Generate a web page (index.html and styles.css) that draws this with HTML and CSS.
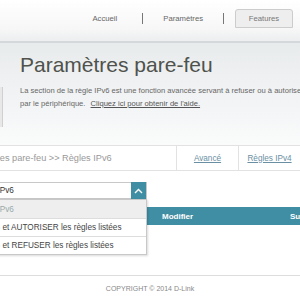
FILE: index.html
```html
<!DOCTYPE html>
<html lang="fr">
<head>
    <meta charset="UTF-8">
    <meta name="viewport" content="width=device-width, initial-scale=1.0">
    <title>Paramètres pare-feu - D-Link</title>
    <link rel="stylesheet" href="styles.css">
</head>
<body>
    <div class="topnav">
        <a class="nav-link" href="#">Accueil</a>
        <span class="nav-sep"></span>
        <a class="nav-link" href="#">Paramètres</a>
        <span class="nav-sep"></span>
        <a class="nav-link nav-current" href="#">Features</a>
    </div>

    <div class="hero">
        <div class="device"></div>
        <h1>Paramètres pare-feu</h1>
        <p class="intro">La section de la règle IPv6 est une fonction avancée servant à refuser ou à autoriser le trafic passant<br>par le périphérique. <a href="#">Cliquez ici pour obtenir de l'aide.</a></p>
    </div>

    <div class="crumbs">
        <div class="crumb-path"><span>Paramètres pare-feu &gt;&gt; Règles IPv6</span></div>
        <a class="crumb-tab" href="#">Avancé</a>
        <a class="crumb-tab" href="#">Règles IPv4</a>
    </div>

    <div class="filter">
        <div class="select">
            <span class="select-value">Désactiver le filtrage IPv6</span>
            <span class="select-btn">
                <svg width="9" height="6" viewBox="0 0 9 6"><path d="M1 5 L4.5 1.5 L8 5" fill="none" stroke="#fff" stroke-width="1.4"/></svg>
            </span>
        </div>
        <ul class="options">
            <li class="selected">Désactiver le filtrage IPv6</li>
            <li>Activer le filtrage IPv6 et AUTORISER les règles listées</li>
            <li>Activer le filtrage IPv6 et REFUSER les règles listées</li>
        </ul>
    </div>

    <div class="rules-head">
        <span class="col-name">Nom</span>
        <span class="col-edit">Modifier</span>
        <span class="col-del">Supprimer</span>
    </div>

    <div class="footer">COPYRIGHT © 2014 D-Link</div>
</body>
</html>
```

FILE: styles.css
```css
* {
    margin: 0;
    padding: 0;
    box-sizing: border-box;
}

body {
    font-family: "Liberation Sans", Arial, sans-serif;
    background-color: #fff;
    color: #444;
    width: 300px;
    height: 300px;
    overflow: hidden;
}

a {
    color: inherit;
}

.topnav {
    height: 43px;
    display: flex;
    align-items: center;
    justify-content: flex-end;
    padding: 0 7px 4px 0;
    background: linear-gradient(to bottom, #fff 0%, #f7f7f7 70%, #eceeef 100%);
    border-bottom: 2px solid #d4d8da;
}

.nav-link {
    font-size: 7.7px;
    color: #666;
    text-decoration: none;
}

.nav-sep {
    width: 1px;
    height: 11px;
    background: #777;
    margin: 0 20px;
}

.topnav .nav-link:first-child {
    margin-right: 5px;
}

.nav-current {
    width: 58px;
    height: 19px;
    display: flex;
    align-items: center;
    justify-content: center;
    margin-left: -9px;
    background: #eee;
    border: 1px solid #ccc;
    border-radius: 3px 3px 0 0;
    color: #777;
}

.hero {
    position: relative;
    height: 102px;
    padding: 9px 0 0 20px;
    background: linear-gradient(to bottom, #e8ebec 0%, #f3f4f5 60%, #fafbfb 100%);
}

.device {
    position: absolute;
    left: 0;
    top: 44px;
    width: 3px;
    height: 40px;
    background: #e8e8e8;
    border-right: 1px solid #d0d0d0;
}

.hero h1 {
    font-size: 21px;
    font-weight: normal;
    color: #4f524d;
    line-height: 26px;
}

.intro {
    font-size: 7.6px;
    line-height: 13px;
    color: #666;
    margin-top: 6px;
    white-space: nowrap;
}

.intro a {
    color: #555;
    margin-left: 3px;
}

.crumbs {
    height: 26px;
    display: flex;
    border-top: 1px solid #e2e2e2;
    border-bottom: 1px solid #e2e2e2;
    background: #fff;
}

.crumb-path {
    width: 176px;
    flex-shrink: 0;
    overflow: hidden;
    white-space: nowrap;
    display: flex;
    align-items: center;
    font-size: 9.2px;
    color: #999;
}

.crumb-path span {
    margin-left: -38px;
}

.crumb-tab {
    width: 62px;
    flex-shrink: 0;
    display: flex;
    align-items: center;
    justify-content: center;
    border-left: 1px solid #e2e2e2;
    font-size: 8.2px;
    color: #6a8fa3;
    white-space: nowrap;
}

.filter {
    position: relative;
    width: 233px;
    margin: 11px 0 0 -86px;
    z-index: 2;
}

.select {
    height: 17px;
    display: flex;
    align-items: center;
    padding-left: 6px;
    border: 1px solid #c8c8c8;
    background: #fff;
    white-space: nowrap;
}

.select-value {
    flex: 1;
    font-size: 8.2px;
    color: #333;
}

.select-btn {
    width: 15px;
    height: 17px;
    flex-shrink: 0;
    display: flex;
    align-items: center;
    justify-content: center;
    background: #3f8ea3;
}

.options {
    position: absolute;
    left: 0;
    top: 17px;
    width: 233px;
    list-style: none;
    background: #fff;
    border: 1px solid #c8c8c8;
    box-shadow: 1px 1px 2px rgba(0, 0, 0, 0.15);
}

.options li {
    height: 18px;
    display: flex;
    align-items: center;
    padding-left: 6px;
    white-space: nowrap;
    font-size: 8.2px;
    color: #444;
    border-top: 1px solid #ddd;
}

.options li:first-child {
    border-top: none;
}

.options li.selected {
    background: #eee;
    color: #9aa;
}

.rules-head {
    height: 18px;
    margin-top: 8px;
    display: flex;
    align-items: center;
    background: #3f8ea3;
    color: #fff;
    font-size: 8px;
    font-weight: bold;
    white-space: nowrap;
}

.col-name {
    width: 162px;
    flex-shrink: 0;
    padding-left: 10px;
}

.col-edit {
    width: 128px;
    flex-shrink: 0;
}

.footer {
    margin-top: 50px;
    border-top: 1px solid #ddd;
    padding-top: 9px;
    text-align: center;
    font-size: 7px;
    color: #888;
}
```
